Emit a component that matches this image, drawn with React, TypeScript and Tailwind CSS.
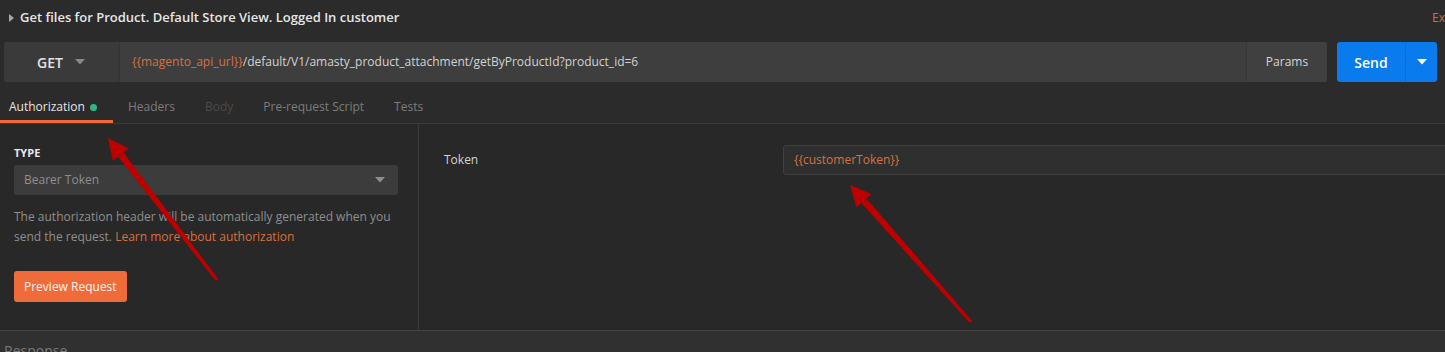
import React from 'react';

const tabs = [
  { name: 'Headers', dim: false },
  { name: 'Body', dim: true },
  { name: 'Pre-request Script', dim: false },
  { name: 'Tests', dim: false },
];

// red annotation arrows drawn over the screenshot
const arrows = [
  { tip: [108, 138], tail: [217, 280] },
  { tip: [850, 185], tail: [971, 322] },
];

const arrowShape = (tip: number[], tail: number[]) => {
  const dx = tail[0] - tip[0];
  const dy = tail[1] - tip[1];
  const len = Math.sqrt(dx * dx + dy * dy);
  const d = [dx / len, dy / len];
  const n = [-d[1], d[0]];
  const head = 21;
  const base = [tip[0] + d[0] * head, tip[1] + d[1] * head];
  const p = (pt: number[], k: number) => `${pt[0] + n[0] * k},${pt[1] + n[1] * k}`;
  return {
    head: `${tip[0]},${tip[1]} ${p(base, 10)} ${p(base, -10)}`,
    shaft: `${p(base, 3.4)} ${p(tail, 1.6)} ${p(tail, -1.6)} ${p(base, -3.4)}`,
  };
};

const Caret = ({ className }: { className: string }) => (
  <svg width="10" height="6" viewBox="0 0 10 6" className={className}>
    <path d="M0 0 L10 0 L5 5.5 Z" fill="currentColor" />
  </svg>
);

const App = () => {
  return (
    <div className="relative h-[352px] w-full overflow-hidden bg-[#2b2b2b] font-['Open_Sans',sans-serif] text-[12px]">
      {/* Title */}
      <div className="flex h-[34px] items-center overflow-hidden pt-[2px]">
        <div className="flex w-[1432px] shrink-0 items-center pl-[9px]">
          <svg width="5" height="8" viewBox="0 0 5 8" className="mr-[6px] text-[#a8a8a8]">
            <path d="M0 0 L5 4 L0 8 Z" fill="currentColor" />
          </svg>
          <span className="text-[13px] font-semibold text-[#e6e6e6]">
            Get files for Product. Default Store View. Logged In customer
          </span>
        </div>
        <span className="shrink-0 whitespace-nowrap text-[12px] text-[#d36a42]">Examples (0)</span>
      </div>

      {/* Request bar */}
      <div className="mt-[8px] flex h-[40px] pl-[4px]">
        <div className="flex w-[1323px] overflow-hidden rounded-[3px] bg-[#3e3e3e]">
          <div className="flex w-[116px] items-center border-r border-[#333333] bg-[#3a3a3a] pl-[33px]">
            <span className="text-[14px] font-semibold text-[#e2e2e2]">GET</span>
            <Caret className="ml-[12px] text-[#8a8a8a]" />
          </div>
          <div className="flex flex-1 items-center pl-[12px] text-[12px] text-[#d2d2d2]">
            <span className="text-[#d9703f]">{'{{magento_api_url}}'}</span>
            <span>/default/V1/amasty_product_attachment/getByProductId?product_id=6</span>
          </div>
          <div className="flex w-[81px] items-center justify-center border-l border-[#383838] bg-[#404040] text-[12px] text-[#d6d6d6]">
            Params
          </div>
        </div>
        <div className="ml-[10px] flex w-[100px] overflow-hidden rounded-[3px] bg-[#097bed]">
          <div className="flex w-[69px] items-center justify-center border-r border-[#0b6cd4] text-[14px] font-semibold text-white">
            Send
          </div>
          <div className="flex flex-1 items-center justify-center">
            <Caret className="text-white" />
          </div>
        </div>
      </div>

      {/* Tabs */}
      <div className="flex h-[42px] items-end border-b border-[#3b3b3b]">
        <div className="flex h-[34px] w-[113px] items-center border-b-[3px] border-[#ef6b3a] pl-[9px] pt-[5px] text-[#e4e4e4]">
          Authorization
          <span className="ml-[5px] h-[7px] w-[7px] rounded-full bg-[#2eb886]" />
        </div>
        <div className="flex h-[34px] items-center gap-x-[30px] pl-[15px] pt-[1px]">
          {tabs.map(t => (
            <span key={t.name} className={t.dim ? 'text-[#4a4a4a]' : 'text-[#7c7c7c]'}>
              {t.name}
            </span>
          ))}
        </div>
      </div>

      {/* Panels */}
      <div className="flex h-[206px] bg-[#282828]">
        <div className="w-[419px] shrink-0 border-r border-[#3a3a3a] px-[14px] pt-[22px]">
          <div className="text-[11px] font-bold leading-[14px] text-[#e8e8e8]">TYPE</div>
          <div className="mt-[5px] flex h-[30px] w-[384px] items-center justify-between rounded-[3px] bg-[#3c3c3c] pl-[10px] pr-[13px]">
            <span className="text-[#8e8e8e]">Bearer Token</span>
            <Caret className="text-[#8e8e8e]" />
          </div>
          <p className="mt-[12px] leading-[20px] text-[#8f8f8f]">
            The authorization header will be automatically generated when you send the request.{' '}
            <span className="text-[#d9703f]">Learn more about authorization</span>
          </p>
          <button className="mt-[24px] h-[31px] rounded-[3px] bg-[#ef6b3a] px-[10px] text-[12px] text-[#fff3ee]">
            Preview Request
          </button>
        </div>
        <div className="flex flex-1 items-start overflow-hidden pl-[25px] pt-[21px]">
          <div className="flex h-[30px] w-[339px] shrink-0 items-center text-[#d4d4d4]">Token</div>
          <div className="-mr-[4px] flex h-[30px] flex-1 items-center rounded-[3px] border border-[#404040] bg-[#2f2f2f] pl-[10px] text-[#d9703f]">
            {'{{customerToken}}'}
          </div>
        </div>
      </div>

      {/* Response */}
      <div className="h-[30px] border-t border-[#444444] bg-[#303030] pl-[4px] pt-[9px] text-[14px] text-[#7a7a7a]">
        Response
      </div>

      {/* Annotation arrows */}
      <svg className="pointer-events-none absolute inset-0" width="1445" height="352">
        {arrows.map((a, i) => {
          const s = arrowShape(a.tip, a.tail);
          return (
            <g key={i} fill="#bd0000">
              <polygon points={s.shaft} />
              <polygon points={s.head} />
            </g>
          );
        })}
      </svg>
    </div>
  );
};

export default App;
